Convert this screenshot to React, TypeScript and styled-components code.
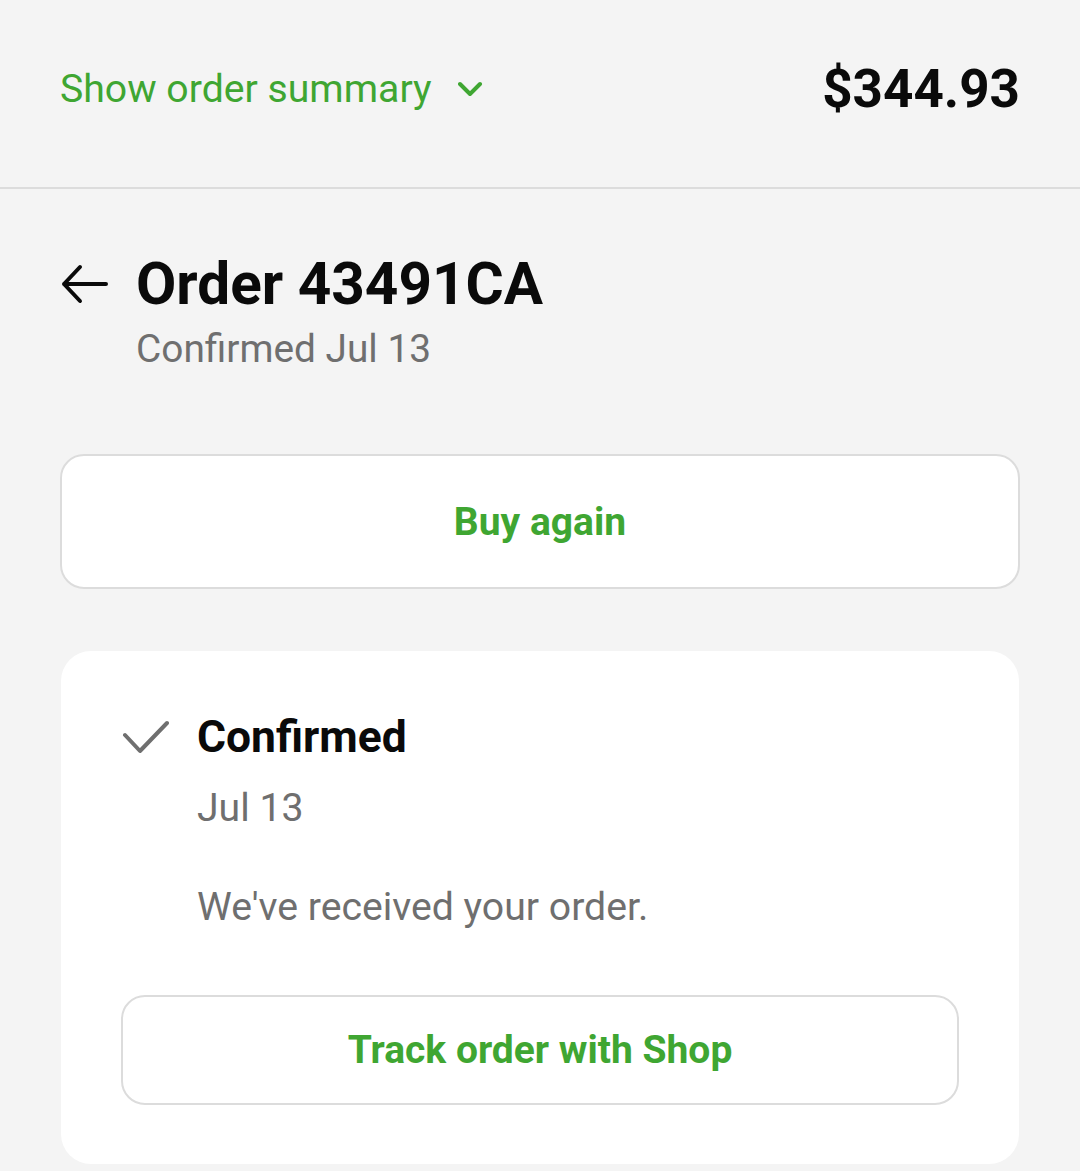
import React from "react";
import styled, { createGlobalStyle } from "styled-components";

const GREEN = "#3fa632";
const GRAY = "#6f6f6f";
const BORDER = "#dcdcdc";

const Global = createGlobalStyle`
  html, body {
    margin: 0;
    padding: 0;
    background: #f4f4f4;
  }
  body {
    font-family: Roboto, "Liberation Sans", Arial, sans-serif;
    color: #0a0a0a;
  }
  * { box-sizing: border-box; }
`;

const Page = styled.div`
  width: 1080px;
  min-height: 1171px;
  background: #f4f4f4;
`;

const Header = styled.header`
  height: 189px;
  padding: 0 60px 10px 60px;
  border-bottom: 2px solid ${BORDER};
  display: flex;
  align-items: center;
  justify-content: space-between;
`;

const SummaryToggle = styled.button`
  display: flex;
  align-items: center;
  gap: 26px;
  border: none;
  background: none;
  padding: 0;
  margin: 0;
  font-family: inherit;
  font-size: 39.2px;
  line-height: 46px;
  color: ${GREEN};
  cursor: pointer;
`;

const Price = styled.div`
  font-size: 53px;
  font-weight: 700;
  line-height: 64px;
  color: #0a0a0a;
`;

const Main = styled.main`
  padding: 60px 60px 0 60px;
  display: flex;
  flex-direction: column;
`;

const TitleGrid = styled.div`
  display: grid;
  grid-template-columns: 76px 1fr;
  align-items: center;
`;

const BackButton = styled.button`
  border: none;
  background: none;
  padding: 0;
  width: 48px;
  height: 40px;
  display: flex;
  align-items: center;
  cursor: pointer;
`;

const Title = styled.h1`
  margin: 0;
  font-size: 58.5px;
  font-weight: 700;
  line-height: 70px;
  color: #0a0a0a;
`;

const Subtitle = styled.div`
  grid-column: 2;
  margin-top: 7px;
  font-size: 38.8px;
  line-height: 46px;
  color: ${GRAY};
`;

const OutlineButton = styled.button<{ $height: number }>`
  width: 100%;
  height: ${(p) => p.$height}px;
  border: 2.5px solid ${BORDER};
  border-radius: 24px;
  background: #fff;
  font-family: inherit;
  font-size: 39px;
  font-weight: 700;
  color: ${GREEN};
  display: flex;
  align-items: center;
  justify-content: center;
  cursor: pointer;
`;

const BuyAgainWrap = styled.div`
  margin-top: 82px;
`;

const Card = styled.section`
  margin: 62px 1px 0 1px;
  background: #fff;
  border-radius: 30px;
  padding: 60px 60px 59px 60px;
`;

const StatusGrid = styled.div`
  display: grid;
  grid-template-columns: 76px 1fr;
`;

const CheckBox = styled.div`
  height: 52px;
  display: flex;
  align-items: center;
`;

const StatusTitle = styled.div`
  font-size: 44.4px;
  font-weight: 700;
  line-height: 52px;
  color: #0a0a0a;
`;

const StatusText = styled.div<{ $gap: number }>`
  grid-column: 2;
  margin-top: ${(p) => p.$gap}px;
  font-size: 39.2px;
  line-height: 46px;
  color: ${GRAY};
`;

const TrackWrap = styled.div`
  margin-top: 65px;
`;

const Chevron = () => (
  <svg width="26" height="16" viewBox="0 0 26 16" fill="none">
    <path d="M2 3 L12 13 L22 3" stroke={GREEN} strokeWidth="4" strokeLinecap="round" strokeLinejoin="round" />
  </svg>
);

const BackArrow = () => (
  <svg width="48" height="40" viewBox="0 0 48 40" fill="none">
    <path d="M4 20 H46 M20 3 L4 20 L20 37" stroke="#0a0a0a" strokeWidth="4" strokeLinecap="round" strokeLinejoin="round" />
  </svg>
);

const Check = () => (
  <svg width="48" height="36" viewBox="0 0 48 36" fill="none">
    <path d="M4 16 L19 32 L46 4" stroke={GRAY} strokeWidth="4" strokeLinecap="round" strokeLinejoin="round" />
  </svg>
);

export default function App() {
  return (
    <Page>
      <Global />
      <Header>
        <SummaryToggle>
          Show order summary
          <Chevron />
        </SummaryToggle>
        <Price>$344.93</Price>
      </Header>
      <Main>
        <TitleGrid>
          <BackButton aria-label="Back">
            <BackArrow />
          </BackButton>
          <Title>Order 43491CA</Title>
          <Subtitle>Confirmed Jul 13</Subtitle>
        </TitleGrid>
        <BuyAgainWrap>
          <OutlineButton $height={135}>Buy again</OutlineButton>
        </BuyAgainWrap>
        <Card>
          <StatusGrid>
            <CheckBox>
              <Check />
            </CheckBox>
            <StatusTitle>Confirmed</StatusTitle>
            <StatusText $gap={22}>Jul 13</StatusText>
            <StatusText $gap={53}>We've received your order.</StatusText>
          </StatusGrid>
          <TrackWrap>
            <OutlineButton $height={110}>Track order with Shop</OutlineButton>
          </TrackWrap>
        </Card>
      </Main>
    </Page>
  );
}
